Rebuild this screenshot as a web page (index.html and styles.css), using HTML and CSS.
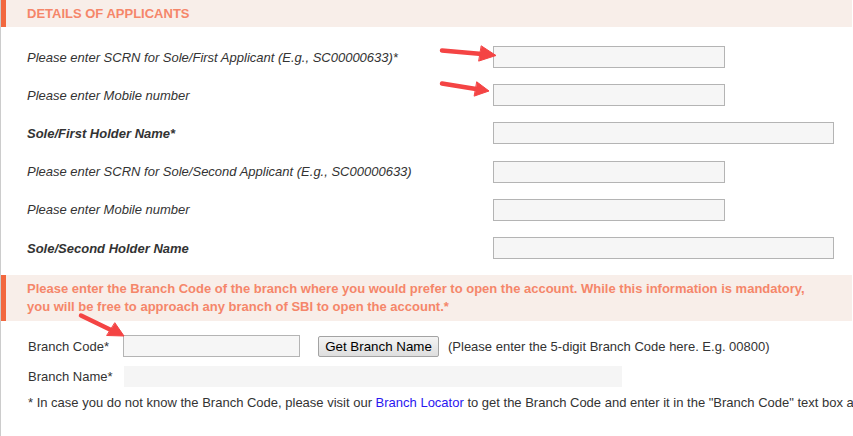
FILE: index.html
```html
<!DOCTYPE html>
<html lang="en">
<head>
<meta charset="utf-8">
<title>Details of Applicants</title>
<link rel="stylesheet" href="styles.css">
</head>
<body>
<div class="page">
  <div class="section-head">DETAILS OF APPLICANTS</div>

  <div class="applicants">
    <div class="row">
      <label class="lbl it">Please enter SCRN for Sole/First Applicant (E.g., SC00000633)*</label>
      <input class="inp" type="text">
    </div>
    <div class="row">
      <label class="lbl it">Please enter Mobile number</label>
      <input class="inp" type="text">
    </div>
    <div class="row">
      <label class="lbl it b">Sole/First Holder Name*</label>
      <input class="inp wide" type="text">
    </div>
    <div class="row">
      <label class="lbl it">Please enter SCRN for Sole/Second Applicant (E.g., SC00000633)</label>
      <input class="inp" type="text">
    </div>
    <div class="row">
      <label class="lbl it">Please enter Mobile number</label>
      <input class="inp" type="text">
    </div>
    <div class="row">
      <label class="lbl it b">Sole/Second Holder Name</label>
      <input class="inp wide" type="text">
    </div>
  </div>

  <div class="notice">Please enter the Branch Code of the branch where you would prefer to open the account. While this information is mandatory, you will be free to approach any branch of SBI to open the account.*</div>

  <div class="branch">
    <div class="brow code-row">
      <label class="blbl">Branch Code*</label>
      <input class="inp code" type="text">
      <button class="btn" type="button">Get Branch Name</button>
      <span class="hint">(Please enter the 5-digit Branch Code here. E.g. 00800)</span>
    </div>
    <div class="brow name-row">
      <label class="blbl name-lbl">Branch Name*</label>
      <div class="name-box"></div>
    </div>
    <p class="foot">* In case you do not know the Branch Code, please visit our <a class="link" href="#">Branch Locator</a> to get the Branch Code and enter it in the "Branch Code" text box above.</p>
  </div>
</div>

<svg class="arrows" width="853" height="436" viewBox="0 0 853 436" aria-hidden="true">
  <g fill="#f44444" stroke="#f44444" stroke-linecap="round" stroke-linejoin="round">
    <line x1="442" y1="50.5" x2="482" y2="54" stroke-width="4.5"/>
    <polygon points="481.5,46 496,55.5 479,61" stroke-width="1"/>
    <line x1="442" y1="83.5" x2="476" y2="89" stroke-width="4.5"/>
    <polygon points="477,82 489,91 474.5,96" stroke-width="1"/>
    <line x1="81" y1="315.5" x2="112" y2="330.5" stroke-width="4.5"/>
    <polygon points="115,323 124,336 107,335.5" stroke-width="1"/>
  </g>
</svg>
</body>
</html>
```

FILE: styles.css
```css
html, body {
  margin: 0;
  padding: 0;
  background: #ffffff;
}

body {
  position: relative;
  width: 853px;
  height: 436px;
  overflow: hidden;
  font-family: "Liberation Sans", Arial, sans-serif;
  font-size: 13px;
  color: #333333;
}

.page {
  width: 851px;
  min-height: 436px;
  border-left: 1px solid #cccccc;
}

.section-head {
  height: 27px;
  line-height: 27px;
  background: #f8eee9;
  border-left: 5px solid #f2683f;
  padding-left: 21px;
  font-weight: bold;
  font-size: 13px;
  color: #f5866a;
}

.applicants {
  padding-top: 11px;
  padding-left: 26px;
}

.row {
  display: grid;
  grid-template-columns: 466px auto;
  align-items: center;
  height: 38.2px;
}

.lbl {
  color: #333333;
  white-space: nowrap;
}

.it {
  font-style: italic;
}

.b {
  font-weight: bold;
}

.inp {
  box-sizing: border-box;
  width: 232px;
  height: 22px;
  margin: 0;
  border: 1px solid #b4b4b4;
  background: #f6f6f6;
  padding: 0 3px;
  font: inherit;
}

.inp.wide {
  width: 341px;
}

.notice {
  margin-top: 8px;
  background: #f8eee9;
  border-left: 5px solid #f2683f;
  padding: 5px 30px 5px 21px;
  line-height: 18px;
  font-weight: bold;
  font-size: 13px;
  color: #f5866a;
}

.branch {
  padding-left: 27px;
}

.brow {
  display: flex;
  align-items: center;
}

.code-row {
  margin-top: 14px;
  height: 22px;
}

.blbl {
  width: 95px;
  flex: none;
  white-space: nowrap;
}

.inp.code {
  width: 177px;
}

.btn {
  box-sizing: border-box;
  margin: 0 0 0 18px;
  width: 121px;
  height: 21px;
  padding: 0;
  border: 1px solid #a3a3a3;
  border-radius: 2px;
  background: linear-gradient(#f4f4f4, #dedede);
  font-family: "Liberation Sans", Arial, sans-serif;
  font-size: 13.33px;
  color: #000000;
}

.hint {
  margin-left: 9px;
  white-space: nowrap;
}

.name-row {
  margin-top: 9px;
  height: 21px;
}

.name-lbl {
  width: 96px;
}

.name-box {
  width: 498px;
  height: 21px;
  background: #f5f5f5;
}

.foot {
  margin: 7px 0 0 0;
  line-height: 18px;
  white-space: nowrap;
}

.link {
  color: #2a16f0;
  text-decoration: none;
}

.arrows {
  position: absolute;
  left: 0;
  top: 0;
  pointer-events: none;
}
```
